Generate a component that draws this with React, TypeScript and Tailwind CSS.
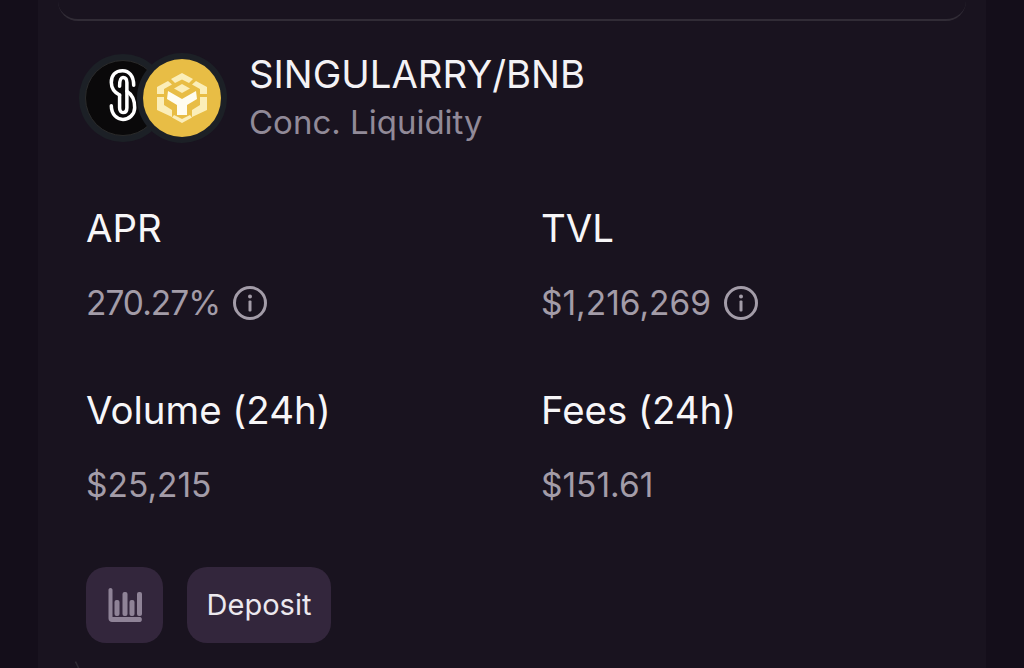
const SingularityLogo = () => (
  <div className="z-0 flex h-[88px] w-[88px] items-center justify-center rounded-full bg-[#1c2026]">
    <div className="flex h-[76px] w-[76px] items-center justify-center rounded-full border border-[#2b2b2b] bg-[#0a090a]">
      <svg viewBox="0 0 76 76" className="h-[76px] w-[76px]" fill="none">
        <g transform="translate(15 4)" stroke="#ffffff" strokeWidth="3.6" strokeLinecap="round">
          <path d="M34 21 C34 11 29 6 22.5 6 C15 6 11 11 11 18 C11 24 14 28 19.5 31" />
          <path d="M27 27 C32 30 35 36 35 44 C35 51 29 56 23 56 C17 56 11 51 11 42" />
          <path d="M19.5 22 C19.5 15 21 13 23 13 C26 13 27 15 27 18 L27 44 C27 47 26 49 23 49 C21 49 19.5 47 19.5 44 L19.5 31" />
        </g>
      </svg>
    </div>
  </div>
);

const BnbLogo = () => (
  <div className="z-10 -ml-[30px] flex h-[90px] w-[90px] items-center justify-center rounded-full bg-[#1c2026]">
    <div className="flex h-[78px] w-[78px] items-center justify-center rounded-full bg-[#e8bd45]">
      <svg viewBox="0 0 50 50" className="h-[50px] w-[50px]" fill="#fbeeb9">
        <path d="M25 0 L36 6 L32 10 L25 6.5 L18 10 L14 6 Z" />
        <path d="M25 11 L33 15.5 L25 20 L17 15.5 Z" />
        <path d="M11 8 L15 11.5 L7 16 L7 21 L0 21 L0 14 Z" />
        <path d="M39 8 L50 14 L50 21 L43 21 L43 16 L35 11.5 Z" />
        <path d="M11 18 L25 26 L39 18 L40 26 L30 32 L30 42 L20 42 L20 32 L10 26 Z" fill="#fffdf0" />
        <path d="M0 24 L7 24 L7 32 L15 37 L15 44 L0 37 Z" />
        <path d="M50 24 L50 37 L35 44 L35 37 L43 32 L43 24 Z" />
        <path d="M17 42 L25 46 L33 42 L35 44.5 L25 50 L15 44.5 Z" />
      </svg>
    </div>
  </div>
);

const InfoIcon = () => (
  <svg viewBox="0 0 36 36" className="h-9 w-9" fill="none">
    <circle cx="18" cy="18" r="15.5" stroke="#a39ca8" strokeWidth="3" />
    <circle cx="18" cy="11.5" r="2" fill="#a39ca8" />
    <rect x="16.5" y="15.5" width="3" height="11" rx="1" fill="#a39ca8" />
  </svg>
);

const ChartIcon = () => (
  <svg viewBox="0 0 36 36" className="h-9 w-9" fill="#8f8397">
    <path d="M3.5 1 C5 1 5.5 2 5.5 3 L5.5 30 L33 30 C35.5 30 35.5 35 33 35 L5 35 C3 35 1.5 33.5 1.5 31.5 L1.5 3 C1.5 2 2 1 3.5 1 Z" />
    <rect x="7.5" y="13" width="5" height="16" rx="2" />
    <rect x="15.5" y="5" width="5" height="24" rx="2" />
    <rect x="22.5" y="13" width="5" height="16" rx="2" />
    <rect x="30" y="5" width="5" height="24" rx="2" />
  </svg>
);

const stats = [
  { label: "APR", value: "270.27%", info: true, valueClass: "tracking-[-1px]" },
  { label: "TVL", value: "$1,216,269", info: true, valueClass: "" },
  { label: "Volume (24h)", value: "$25,215", info: false, valueClass: "" },
  { label: "Fees (24h)", value: "$151.61", info: false, valueClass: "" },
];

const App = () => {
  return (
    <main className="flex h-[668px] w-[1024px] justify-center overflow-hidden bg-[#140e1a] font-['Inter',sans-serif]">
      <div className="h-full w-[948px] bg-[#19131f] px-5">
        <div className="h-[21px] rounded-b-[20px] border-b-2 border-[#312c36]" />
        <div className="pl-[21px] pt-[32px]">
          <div className="flex items-start">
            <div className="flex items-center">
              <SingularityLogo />
              <BnbLogo />
            </div>
            <div className="ml-[22px] -mt-[2px]">
              <div className="text-[38.3px] leading-[46px] text-[#f4f2f5]">SINGULARRY/BNB</div>
              <div className="mt-[2px] text-[33px] leading-[46px] text-[#918a98]">Conc. Liquidity</div>
            </div>
          </div>

          <div className="mt-[60px] grid grid-cols-[455px_1fr] gap-y-[61px] pl-[7px]">
            {stats.map((stat) => (
              <div key={stat.label}>
                <div className="text-[38.4px] leading-[46px] text-[#f7f6f8]">{stat.label}</div>
                <div className="mt-[29px] flex h-[46px] items-center gap-3 text-[33.5px] text-[#a39ca8]">
                  <span className={stat.valueClass}>{stat.value}</span>
                  {stat.info && <InfoIcon />}
                </div>
              </div>
            ))}
          </div>

          <div className="mt-[59px] flex gap-[24px] pl-[7px]">
            <button className="flex h-[76px] w-[77px] items-center justify-center rounded-[20px] bg-[#33263c]">
              <ChartIcon />
            </button>
            <button className="h-[76px] w-[144px] rounded-[20px] bg-[#33263c] text-[29px] text-[#ece8ee]">
              Deposit
            </button>
          </div>

          <svg viewBox="0 0 8 10" className="-ml-[4px] mt-[18px] h-[10px] w-2" fill="none">
            <path d="M0.5 0.5 L4 8" stroke="#2e2a33" strokeWidth="1.5" />
          </svg>
        </div>
      </div>
    </main>
  );
};

export default App;
